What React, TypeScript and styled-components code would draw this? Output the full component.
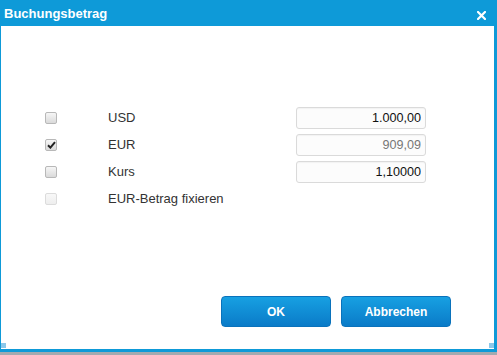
import React from "react";
import styled, { createGlobalStyle } from "styled-components";

const Global = createGlobalStyle`
  html, body { margin: 0; padding: 0; background: #a3aab0; }
  body { font-family: "Liberation Sans", Arial, sans-serif; }
`;

const Dialog = styled.div`
  width: 497px;
  height: 352px;
  box-sizing: border-box;
  background: #0e9ad8;
  border-left: 1px solid #0e9ad8;
  border-right: 3px solid #0e9ad8;
  border-bottom: 3px solid #0e9ad8;
  display: flex;
  flex-direction: column;
  position: relative;
`;

const TitleBar = styled.div`
  height: 26px;
  display: flex;
  align-items: center;
  justify-content: space-between;
  padding: 0 7px 0 3px;
  flex: none;
`;

const Title = styled.span`
  color: #fff;
  font-weight: bold;
  font-size: 13px;
  padding-top: 1px;
`;

const Close = styled.button`
  border: 0;
  background: transparent;
  padding: 0;
  width: 12px;
  height: 12px;
  display: flex;
  align-items: center;
  justify-content: center;
  cursor: pointer;
  margin-top: 4px;
`;

const Body = styled.div`
  flex: 1;
  background: #fff;
  display: flex;
  flex-direction: column;
  padding: 78px 0 22px 0;
  box-sizing: border-box;
`;

const Form = styled.div`
  display: grid;
  grid-template-columns: 63px 188px 130px;
  grid-auto-rows: 27px;
  padding-left: 44px;
  align-items: center;
`;

const Box = styled.span<{ $disabled?: boolean }>`
  width: 12px;
  height: 12px;
  box-sizing: border-box;
  border-radius: 2px;
  border: 1px solid ${(p) => (p.$disabled ? "#dcdcdc" : "#b8b8b8")};
  background: ${(p) =>
    p.$disabled
      ? "linear-gradient(#f8f8f8, #eeeeee)"
      : "linear-gradient(#f6f6f6, #dadada)"};
  display: flex;
  align-items: center;
  justify-content: center;
`;

const Label = styled.span<{ $disabled?: boolean }>`
  font-size: 13px;
  color: #333;
`;

const Field = styled.input<{ $readOnly?: boolean }>`
  width: 130px;
  height: 22px;
  box-sizing: border-box;
  border: 1px solid #dadada;
  border-radius: 3px;
  background: #fcfcfc;
  box-shadow: inset 0 1px 1px rgba(0, 0, 0, 0.04);
  font-family: "Liberation Sans", Arial, sans-serif;
  font-size: 12.6px;
  text-align: right;
  padding: 0 4px 0 4px;
  color: ${(p) => (p.$readOnly ? "#777" : "#111")};
  outline: none;
`;

const Footer = styled.div`
  margin-top: auto;
  display: flex;
  justify-content: flex-end;
  gap: 10px;
  padding-right: 43px;
`;

const Button = styled.button`
  width: 110px;
  height: 31px;
  border: 1px solid #0a72bb;
  border-radius: 4px;
  background: linear-gradient(#17a0e2, #0a7bc8);
  color: #fff;
  font-family: "Liberation Sans", Arial, sans-serif;
  font-weight: bold;
  font-size: 12px;
  cursor: pointer;
`;

const Grip = styled.span<{ $side: "left" | "right" }>`
  position: absolute;
  bottom: 1px;
  ${(p) => (p.$side === "left" ? "left: 0;" : "right: 0;")}
  width: 5px;
  height: 5px;
  background: #8cc8ea;
`;

const Check = () => (
  <svg width="9" height="8" viewBox="0 0 9 8">
    <path d="M1 4.2 L3.4 6.6 L8 1.2" fill="none" stroke="#222" strokeWidth="2" />
  </svg>
);

const rows: { label: string; checked?: boolean; disabled?: boolean; value?: string; readOnly?: boolean }[] = [
  { label: "USD", value: "1.000,00" },
  { label: "EUR", checked: true, value: "909,09", readOnly: true },
  { label: "Kurs", value: "1,10000" },
  { label: "EUR-Betrag fixieren", disabled: true },
];

export default function App() {
  return (
    <>
      <Global />
      <Dialog>
        <TitleBar>
          <Title>Buchungsbetrag</Title>
          <Close aria-label="Schließen">
            <svg width="9" height="9" viewBox="0 0 9 9">
              <path d="M1 1 L8 8 M8 1 L1 8" stroke="#fff" strokeWidth="2.2" strokeLinecap="square" />
            </svg>
          </Close>
        </TitleBar>
        <Body>
          <Form>
            {rows.map((r) => (
              <React.Fragment key={r.label}>
                <Box $disabled={r.disabled}>{r.checked && <Check />}</Box>
                <Label>{r.label}</Label>
                {r.value ? (
                  <Field defaultValue={r.value} readOnly={r.readOnly} $readOnly={r.readOnly} />
                ) : (
                  <span />
                )}
              </React.Fragment>
            ))}
          </Form>
          <Footer>
            <Button>OK</Button>
            <Button>Abbrechen</Button>
          </Footer>
        </Body>
        <Grip $side="left" />
        <Grip $side="right" />
      </Dialog>
    </>
  );
}
